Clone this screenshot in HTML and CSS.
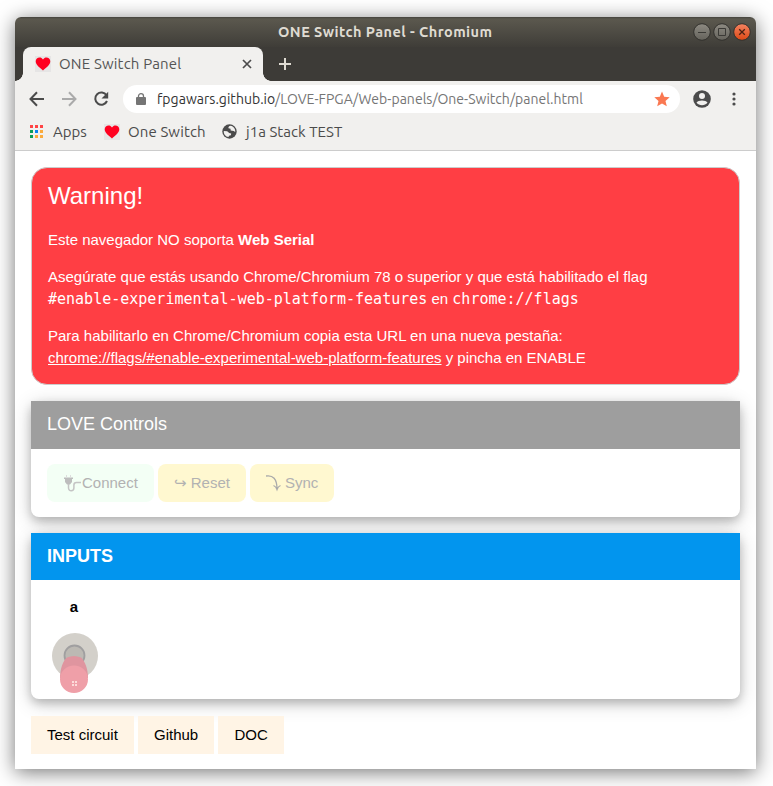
FILE: index.html
```html
<!DOCTYPE html>
<html lang="es">
<head>
<meta charset="utf-8">
<title>ONE Switch Panel</title>
<link rel="stylesheet" href="styles.css">
</head>
<body>
<div class="window">
  <header class="titlebar">
    <span class="window-title">ONE Switch Panel - Chromium</span>
    <div class="window-buttons">
      <svg width="18" height="18" viewBox="0 0 18 18"><defs><linearGradient id="g" x2="0" y2="1"><stop stop-color="#8d8a82"/><stop offset="1" stop-color="#65635c"/></linearGradient></defs><circle cx="9" cy="9" r="8.3" fill="url(#g)" stroke="#32312d"/><path d="M5 9.5h8" stroke="#3b3a36"/></svg>
      <svg width="18" height="18" viewBox="0 0 18 18"><circle cx="9" cy="9" r="8.3" fill="url(#g)" stroke="#32312d"/><path d="M5.5 5.5h7v7h-7z" fill="none" stroke="#3b3a36"/></svg>
      <svg width="18" height="18" viewBox="0 0 18 18"><defs><linearGradient id="o" x2="0" y2="1"><stop stop-color="#f58462"/><stop offset="1" stop-color="#dd4814"/></linearGradient></defs><circle cx="9" cy="9" r="8.3" fill="url(#o)" stroke="#32312d"/><path d="M6.2 6.2l5.6 5.6M11.8 6.2l-5.6 5.6" stroke="#4b2113" stroke-width="1.3"/></svg>
    </div>
  </header>
  <div class="tabs">
    <div class="tab">
      <svg class="heart" width="16" height="16" viewBox="0 0 16 16"><path fill="#e6e5e5" d="M0 0h16v16H0z"/><path fill="#ff0020" d="M8 14.5C5.5 12 .7 9.2.7 5.2.7 1.3 6-.1 8 3.5c2-3.6 7.3-2.2 7.3 1.7 0 4-4.8 6.8-7.3 9.3z"/></svg>
      <span class="tab-title">ONE Switch Panel</span>
      <svg width="10" height="10" viewBox="0 0 10 10"><path d="M1 1l8 8M9 1L1 9" stroke="#4b4b4b" stroke-width="1.7"/></svg>
    </div>
    <svg class="plus" width="12" height="12" viewBox="0 0 12 12"><path d="M6 0v12M0 6h12" stroke="#dfdbd2" stroke-width="2"/></svg>
  </div>
  <div class="toolbar">
    <svg width="16" height="16" viewBox="0 0 16 16" fill="none" stroke="#4b4b4b" stroke-width="2"><path d="M15 8H2M8 1.3L1.5 8 8 14.7"/></svg>
    <svg width="16" height="16" viewBox="0 0 16 16" fill="none" stroke="#aaa" stroke-width="2"><path d="M1 8h13M8 1.3L14.5 8 8 14.7"/></svg>
    <svg width="16" height="16" viewBox="0 0 16 16"><path d="M13.5 4.3A6.1 6.1 0 1 0 14 10" fill="none" stroke="#4b4b4b" stroke-width="2"/><path fill="#4b4b4b" d="M15.2.8v6.7H8.5z"/></svg>
    <div class="address">
      <svg width="10" height="12" viewBox="0 0 10 12"><path fill="#757575" d="M1 4h8q1 0 1 1v6q0 1-1 1H1q-1 0-1-1V5q0-1 1-1z"/><path d="M2.5 5V3a2.5 2.3 0 0 1 5 0v2" fill="none" stroke="#757575" stroke-width="1.3"/></svg>
      <span class="url"><span class="host">fpgawars.github.io</span>/LOVE-FPGA/Web-panels/One-Switch/panel.html</span>
      <svg width="16" height="16" viewBox="0 0 16 16"><path fill="#fa7851" d="M8 .6l2.2 5.1 5.5.5-4.2 3.7 1.3 5.4L8 12.4l-4.8 2.9 1.3-5.4L.3 6.2l5.5-.5z"/></svg>
    </div>
    <svg class="user" width="18" height="18" viewBox="0 0 18 18"><circle cx="9" cy="9" r="8.8" fill="#4b4b4b"/><circle cx="9" cy="6" r="3" fill="#f1f0ee"/><path fill="#f1f0ee" d="M3.5 12.5C5 9.7 13 9.7 14.5 12.5 12 16.2 6 16.2 3.5 12.5z"/></svg>
    <svg width="4" height="14" viewBox="0 0 4 14" fill="#4b4b4b"><circle cx="2" cy="2" r="1.6"/><circle cx="2" cy="7" r="1.6"/><circle cx="2" cy="12" r="1.6"/></svg>
  </div>
  <nav class="bookmarks">
    <svg width="13" height="13" viewBox="0 0 13 13"><path fill="#f44" d="M0 0h3v3H0zM5 0h3v3H5zM10 0h3v3h-3z"/><path fill="#0b9d58" d="M0 5h3v3H0zM0 10h3v3H0z"/><path fill="#0a84f0" d="M5 5h3v3H5z"/><path fill="#fbab3c" d="M10 5h3v3h-3zM5 10h3v3H5zM10 10h3v3h-3z"/></svg>
    <span class="bm apps">Apps</span>
    <svg width="16" height="16" viewBox="0 0 16 16"><path fill="#e6e5e5" d="M0 0h16v16H0z"/><path fill="#ff0020" d="M8 14.5C5.5 12 .7 9.2.7 5.2.7 1.3 6-.1 8 3.5c2-3.6 7.3-2.2 7.3 1.7 0 4-4.8 6.8-7.3 9.3z"/></svg>
    <span class="bm one">One Switch</span>
    <svg class="globe" width="15" height="15" viewBox="0 0 15 15"><circle cx="7.5" cy="7.5" r="7.2" fill="#4b4b4b"/><path fill="#f1f0ee" d="M8.5 1.8c-1.500.2-2.500 1.400-2 2.500l2 .5.2 1.700 3 .5 1.500 1c.5-2.700-1.500-5.700-4.700-6.200zM1.800 7l3.400.3 2 1.700 2 .6-.3 1.600-1.900.6-.5 1.200C3.500 12.700 1.500 10.300 1.800 7z"/></svg>
    <span class="bm stack">j1a Stack TEST</span>
  </nav>
  <main class="page">
    <section class="warning">
      <h3>Warning!</h3>
      <p>Este navegador NO soporta <b>Web Serial</b></p>
      <p>Asegúrate que estás usando Chrome/Chromium 78 o superior y que está habilitado el flag<br><code>#enable-experimental-web-platform-features</code> en <code>chrome://flags</code></p>
      <p>Para habilitarlo en Chrome/Chromium copia esta URL en una nueva pestaña:<br><u>chrome://flags/#enable-experimental-web-platform-features</u> y pincha en ENABLE</p>
    </section>
    <section class="card controls">
      <h4 class="gray">LOVE Controls</h4>
      <div class="row">
        <span class="button connect"><svg width="19" height="18" viewBox="0 0 19 18"><path fill="#bdbdbd" d="M1 3.500h9V5H9v3L7 10.500H4L2 8V5H1z"/><path d="M3.500 1v3M7.500 1v3" stroke="#ddd"/><path d="M5.500 10v4a2.700 2.700 0 0 0 5.400 0v-3q0-2.500 2.600-2.500H18" fill="none" stroke="#c4c4c4" stroke-width="1.500"/></svg>Connect</span>
        <span class="button reset"><span class="hook">↪</span> Reset</span>
        <span class="button sync"><svg width="16" height="18" viewBox="0 0 16 18"><path d="M0 2C7 .8 11 5 11 15M7.500 11.500q2.500 1 3.500 4 1-3 3.500-4" fill="none" stroke="#aaa" stroke-width="1.300"/></svg>Sync</span>
      </div>
    </section>
    <section class="card inputs">
      <h4 class="blue">INPUTS</h4>
      <div class="input">
        <b>a</b>
        <svg width="46" height="60" viewBox="0 0 46 60"><circle cx="23" cy="23" r="23" fill="#d3d0ca"/><circle cx="22.5" cy="22.5" r="10" fill="#bcb9b3" stroke="#a09fa0" stroke-width="1.8"/><path fill="#df959f" d="M8 45c0-9 3-17.500 7-20.500q7-3 14 0c4 3.500 7 11.500 7 20.500z"/><rect x="8" y="32.5" width="28" height="27.500" rx="14" ry="13.700" fill="#ef9fa8"/><path fill="#fcdcda" d="M20 48h2v2h-2zM23 48h2v2h-2zM20 51h2v2h-2zM23 51h2v2h-2z"/></svg>
      </div>
    </section>
    <footer><span class="link test">Test circuit</span><span class="link github">Github</span><span class="link doc">DOC</span></footer>
  </main>
</div>
</body>
</html>
```
FILE: styles.css
```css
* { box-sizing: border-box; }
body { margin: 0; padding: 17px 17px 17px 15px; height: 786px; overflow: hidden; background: #fff; font: 15px/22px "Liberation Sans", Arial, sans-serif; }
svg { display: block; flex: none; }
.window { width: 741px; height: 752px; background: #fff; border-radius: 6px 6px 0 0; box-shadow: 0 3px 20px rgba(0,0,0,.55); }
.titlebar, .tabs, .toolbar, .bookmarks { font-family: Ubuntu, "Noto Sans", sans-serif; white-space: nowrap; }
.titlebar { display: grid; grid-template-columns: 1fr auto 1fr; align-items: center; height: 30px; padding-right: 5px; color: #dfdbd2; background: linear-gradient(#45443e, #5b584e 2px, #3f3d38); border-radius: 6px 6px 0 0; }
.window-title { grid-column: 2; width: 210px; font-size: 14.5px; font-weight: 700; letter-spacing: .45px; }
.window-buttons { display: flex; justify-content: flex-end; gap: 2px; }
.tabs { display: flex; align-items: center; height: 34px; padding-left: 8px; background: radial-gradient(circle at 0 0, #3d3b37 7.5px, #f1f0ee 8px) 0 100% / 8px 8px no-repeat, radial-gradient(circle at 100% 0, #3d3b37 7.5px, #f1f0ee 8px) 248px 100% / 8px 8px no-repeat, #3d3b37; }
.tab { display: flex; align-items: center; width: 240px; height: 34px; padding: 0 11px 0 12px; border-radius: 8px 8px 0 0; background: #f1f0ee; color: #555; }
.tab-title { flex: 1; margin-left: 8px; font-size: 15px; letter-spacing: .18px; }
.plus { margin-left: 16px; }
.toolbar { display: flex; align-items: center; height: 36px; padding-left: 14px; gap: 16px; background: #f1f0ee; }
.address { display: flex; align-items: center; width: 557px; height: 28px; margin-left: -2px; padding: 0 10px 0 13px; border-radius: 14px; background: #fff; }
.url { flex: 1; margin-left: 11px; font-size: 14px; letter-spacing: .03px; color: #757575; }
.host { color: #333; }
.user { margin-left: -3px; margin-right: 5px; }
.bookmarks { display: flex; align-items: center; height: 34px; padding: 0 0 4px 15px; background: #f1f0ee; border-bottom: 1px solid #ccc; color: #4b4b4b; font-size: 15px; }
.apps { width: 51px; margin-left: 10px; }
.one { width: 94px; margin-left: 8px; letter-spacing: .12px; }
.stack { margin-left: 9px; letter-spacing: .05px; }
.page { padding: 16px 16px 0; }
.warning { height: 218px; padding: 0 16px; border: 1px solid #ccc; border-radius: 16px; color: #fff; background: #ff3e44; }
h3 { margin: 0; padding: 10px 0 15px; font-size: 24px; font-weight: 400; line-height: 36px; }
p { margin: 0 0 15px; }
code { font: 15px/22px "DejaVu Sans Mono", monospace; }
.card { background: #fff; border-radius: 8px; box-shadow: 0 4px 10px rgba(0,0,0,.2), 0 4px 20px rgba(0,0,0,.19); margin-top: 16px; }
.controls { height: 116px; }
.inputs { height: 166px; }
h4 { margin: 0; padding: 10px 16px; height: 47px; font-size: 18px; line-height: 27px; font-weight: 400; color: #fff; }
.gray { height: 48px; background: #9e9e9e; }
.blue { background: #0295ee; font-weight: 700; }
.row { display: flex; gap: 4px; padding: 15px 16px; }
.button { display: flex; align-items: center; height: 38px; padding-left: 16px; border-radius: 8px; color: #b2b2b2; background: #fff8d0; white-space: pre; }
.connect { width: 107px; background: #f3fff5; }
.reset { width: 88px; }
.sync { width: 84px; gap: 3px; }
.hook { font-family: "DejaVu Sans", sans-serif; }
.input { display: flex; flex-direction: column; align-items: center; width: 46px; margin: 16px 0 0 20.5px; }
.input svg { margin-top: 14.5px; }
.input b { margin-right: 1px; }
footer { display: flex; gap: 4px; margin-top: 17px; }
.link { height: 38px; padding: 8px 16px; background: #fff4e5; white-space: nowrap; }
.test { width: 103px; }
.github { width: 76px; }
.doc { width: 66px; padding-left: 16.5px; }
```
